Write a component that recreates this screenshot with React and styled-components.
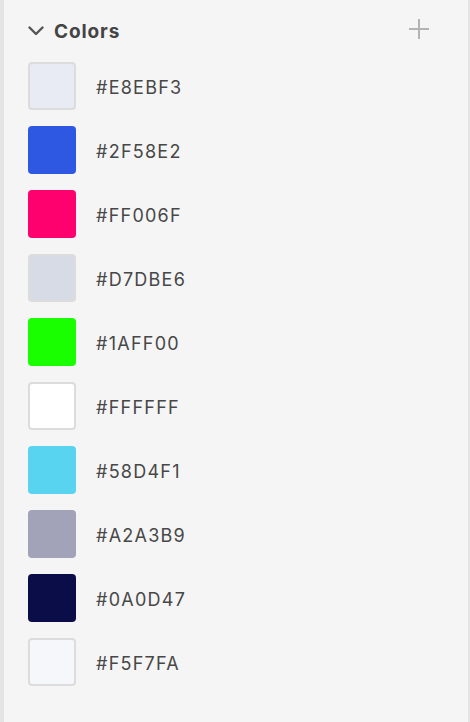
import styled, { createGlobalStyle } from "styled-components";

const GlobalStyle = createGlobalStyle`
  html, body {
    margin: 0;
    padding: 0;
    background: #f5f5f5;
  }
  body {
    font-family: Inter, "Noto Sans", sans-serif;
  }
`;

const colors = [
  { hex: "#E8EBF3", light: true },
  { hex: "#2F58E2" },
  { hex: "#FF006F" },
  { hex: "#D7DBE6", light: true },
  { hex: "#1AFF00" },
  { hex: "#FFFFFF", light: true },
  { hex: "#58D4F1" },
  { hex: "#A2A3B9" },
  { hex: "#0A0D47" },
  { hex: "#F5F7FA", light: true },
];

const Panel = styled.div`
  box-sizing: border-box;
  width: 470px;
  height: 722px;
  background: #f5f5f5;
  border-left: 4px solid #e4e4e4;
  border-right: 2px solid #e4e4e4;
  padding: 14px 24px 0 24px;
`;

const Header = styled.div`
  display: flex;
  align-items: center;
  height: 34px;
  margin-bottom: 14px;
`;

const Title = styled.div`
  display: flex;
  align-items: center;
  gap: 10px;
  flex: 1;
  font-size: 19px;
  font-weight: 700;
  letter-spacing: 0.9px;
  color: #444;
`;

const AddButton = styled.button`
  border: none;
  background: none;
  padding: 0;
  width: 22px;
  height: 22px;
  margin-right: 14px;
  margin-top: -4px;
  display: flex;
  align-items: center;
  justify-content: center;
  cursor: pointer;
`;

const List = styled.div`
  display: flex;
  flex-direction: column;
  gap: 16px;
`;

const Row = styled.div`
  display: flex;
  align-items: center;
  gap: 20px;
`;

const Swatch = styled.div`
  box-sizing: border-box;
  width: 48px;
  height: 48px;
  border-radius: 4px;
  background: ${({ color }) => color};
  border: ${({ $light }) => ($light ? "2px solid #dcdcdc" : "none")};
`;

const Hex = styled.span`
  font-size: 18px;
  color: #474747;
  letter-spacing: 1.25px;
  padding-top: 2px;
`;

export default function App() {
  return (
    <>
      <GlobalStyle />
      <Panel>
        <Header>
          <Title>
            <svg width="16" height="12" viewBox="0 0 16 12" fill="none">
              <path d="M1.5 2.5l6.5 6.5 6.5-6.5" stroke="#555" strokeWidth="2.4" strokeLinecap="round" strokeLinejoin="round" />
            </svg>
            Colors
          </Title>
          <AddButton aria-label="Add color">
            <svg width="22" height="22" viewBox="0 0 22 22">
              <path d="M11 1v20M1 11h20" stroke="#b3b3b3" strokeWidth="2" />
            </svg>
          </AddButton>
        </Header>
        <List>
          {colors.map((c) => (
            <Row key={c.hex}>
              <Swatch color={c.hex} $light={c.light} />
              <Hex>{c.hex}</Hex>
            </Row>
          ))}
        </List>
      </Panel>
    </>
  );
}
